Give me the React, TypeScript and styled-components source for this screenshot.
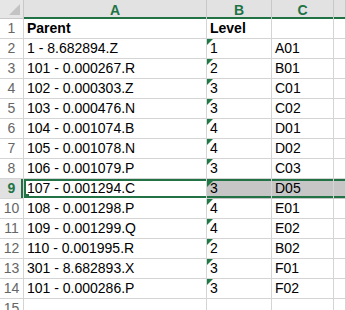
import React from "react";
import styled, { createGlobalStyle, css } from "styled-components";

const GlobalStyle = createGlobalStyle`
    html, body {
        margin: 0;
        padding: 0;
        background: #fff;
        overflow: hidden;
    }
`;

const GREEN = "#217346";
const GRID = "#d4d4d4";

const Sheet = styled.div`
    display: grid;
    grid-template-columns: 24px 183px 65px 62px 1fr;
    grid-auto-rows: 20px;
    grid-template-rows: 19px;
    width: 346px;
    height: 310px;
    overflow: hidden;
    font-family: "Liberation Sans", Arial, sans-serif;
    font-size: 14px;
    color: #000;
`;

const Corner = styled.div`
    position: relative;
    background: #e6e6e6;
    border-right: 1px solid #c8c8c8;
    border-bottom: 1px solid #c8c8c8;

    &::after {
        content: "";
        position: absolute;
        right: 3px;
        bottom: 3px;
        width: 0;
        height: 0;
        border-left: 11px solid transparent;
        border-bottom: 11px solid #c3c3c3;
    }
`;

const ColHeader = styled.div<{ $active: boolean }>`
    display: flex;
    align-items: center;
    justify-content: center;
    background: #e2e2e2;
    border-right: 1px solid #c8c8c8;
    color: ${(p) => (p.$active ? GREEN : "#444")};
    font-weight: bold;
    font-size: 14px;
    box-shadow: inset 0 -2px ${GREEN};
`;

const RowHeader = styled.div<{ $active: boolean }>`
    display: flex;
    align-items: flex-end;
    justify-content: center;
    padding-bottom: 2px;
    box-sizing: border-box;
    background: ${(p) => (p.$active ? "#e1e1e1" : "#fff")};
    color: ${(p) => (p.$active ? GREEN : "#666")};
    font-weight: ${(p) => (p.$active ? "bold" : "normal")};
    border-right: 1px solid ${GRID};
    border-bottom: 1px solid ${GRID};
    ${(p) =>
        p.$active &&
        css`
            box-shadow: inset -2px 0 ${GREEN};
        `}
`;

const Cell = styled.div<{ $selected: boolean; $active: boolean; $bold?: boolean; $flag?: boolean }>`
    position: relative;
    display: flex;
    align-items: flex-end;
    padding: 0 0 2px 3px;
    box-sizing: border-box;
    white-space: nowrap;
    overflow: hidden;
    font-weight: ${(p) => (p.$bold ? "bold" : "normal")};
    border-right: 1px solid ${GRID};
    border-bottom: 1px solid ${GRID};
    background: ${(p) => (p.$selected && !p.$active ? "#c6c6c6" : "#fff")};
    ${(p) =>
        p.$selected &&
        css`
            border-bottom-color: transparent;
            box-shadow: inset 0 2px ${GREEN}, inset 0 -2px ${GREEN};
        `}
    ${(p) =>
        p.$active &&
        css`
            box-shadow: inset 0 2px ${GREEN}, inset 0 -2px ${GREEN}, inset 2px 0 ${GREEN};
        `}

    ${(p) =>
        p.$flag &&
        css`
            &::before {
                content: "";
                position: absolute;
                left: 0;
                top: ${p.$selected ? "2px" : "0"};
                width: 0;
                height: 0;
                border-top: 6px solid #1e7b45;
                border-right: 6px solid transparent;
            }
        `}
`;

const FillHandle = styled.span`
    position: absolute;
    left: 0;
    bottom: 0;
    width: 5px;
    height: 4px;
    background: ${GREEN};
`;

const rows: [string, string, string][] = [
    ["Parent", "Level", ""],
    ["1 - 8.682894.Z", "1", "A01"],
    ["101 - 0.000267.R", "2", "B01"],
    ["102 - 0.000303.Z", "3", "C01"],
    ["103 - 0.000476.N", "3", "C02"],
    ["104 - 0.001074.B", "4", "D01"],
    ["105 - 0.001078.N", "4", "D02"],
    ["106 - 0.001079.P", "3", "C03"],
    ["107 - 0.001294.C", "3", "D05"],
    ["108 - 0.001298.P", "4", "E01"],
    ["109 - 0.001299.Q", "4", "E02"],
    ["110 - 0.001995.R", "2", "B02"],
    ["301 - 8.682893.X", "3", "F01"],
    ["101 - 0.000286.P", "3", "F02"],
    ["", "", ""],
];

const SELECTED_ROW = 9;

export default function App() {
    return (
        <>
            <GlobalStyle />
            <Sheet>
                <Corner />
                <ColHeader $active>A</ColHeader>
                <ColHeader $active>B</ColHeader>
                <ColHeader $active>C</ColHeader>
                <ColHeader $active></ColHeader>
                {rows.map((row, i) => {
                    const num = i + 1;
                    const sel = num === SELECTED_ROW;
                    const header = num === 1;
                    const flag = !header && row[1] !== "";
                    return (
                        <React.Fragment key={num}>
                            <RowHeader $active={sel}>{num}</RowHeader>
                            <Cell $selected={sel} $active={sel} $bold={header}>
                                {row[0]}
                                {sel && <FillHandle />}
                            </Cell>
                            <Cell $selected={sel} $active={false} $bold={header} $flag={flag}>
                                {row[1]}
                            </Cell>
                            <Cell $selected={sel} $active={false}>
                                {row[2]}
                            </Cell>
                            <Cell $selected={sel} $active={false} />
                        </React.Fragment>
                    );
                })}
            </Sheet>
        </>
    );
}
